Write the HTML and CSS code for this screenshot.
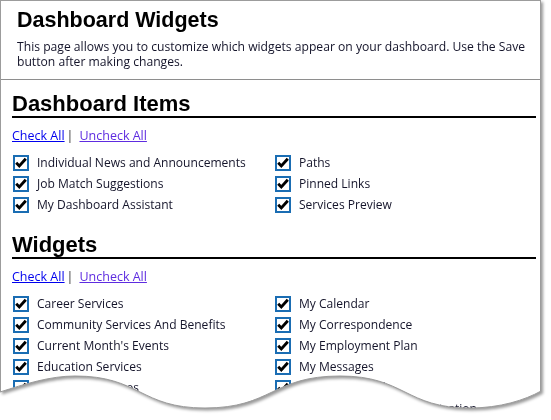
FILE: index.html
```html
<!DOCTYPE html>
<html lang="en">
<head>
<meta charset="utf-8">
<title>Dashboard Widgets</title>
<link rel="stylesheet" href="styles.css">
</head>
<body>
<div class="sheet">
  <div class="page">
    <header class="intro">
      <h1 class="title">Dashboard Widgets</h1>
      <p class="desc">This page allows you to customize which widgets appear on your dashboard. Use the Save button after making changes.</p>
    </header>

    <section class="group">
      <h2 class="group-title">Dashboard Items</h2>
      <div class="bulk"><a href="#" class="bulk-link">Check All</a><span class="sep">|</span><a href="#" class="bulk-link visited">Uncheck All</a></div>
      <ul class="items rows-3">
        <li class="item"><span class="box"><svg viewBox="0 0 12 12"><path d="M1.2 5.8 L4.3 9 L10.8 1.8"/></svg></span>Individual News and Announcements</li>
        <li class="item"><span class="box"><svg viewBox="0 0 12 12"><path d="M1.2 5.8 L4.3 9 L10.8 1.8"/></svg></span>Job Match Suggestions</li>
        <li class="item"><span class="box"><svg viewBox="0 0 12 12"><path d="M1.2 5.8 L4.3 9 L10.8 1.8"/></svg></span>My Dashboard Assistant</li>
        <li class="item"><span class="box"><svg viewBox="0 0 12 12"><path d="M1.2 5.8 L4.3 9 L10.8 1.8"/></svg></span>Paths</li>
        <li class="item"><span class="box"><svg viewBox="0 0 12 12"><path d="M1.2 5.8 L4.3 9 L10.8 1.8"/></svg></span>Pinned Links</li>
        <li class="item"><span class="box"><svg viewBox="0 0 12 12"><path d="M1.2 5.8 L4.3 9 L10.8 1.8"/></svg></span>Services Preview</li>
      </ul>
    </section>

    <section class="group">
      <h2 class="group-title">Widgets</h2>
      <div class="bulk"><a href="#" class="bulk-link">Check All</a><span class="sep">|</span><a href="#" class="bulk-link visited">Uncheck All</a></div>
      <ul class="items rows-6">
        <li class="item"><span class="box"><svg viewBox="0 0 12 12"><path d="M1.2 5.8 L4.3 9 L10.8 1.8"/></svg></span>Career Services</li>
        <li class="item"><span class="box"><svg viewBox="0 0 12 12"><path d="M1.2 5.8 L4.3 9 L10.8 1.8"/></svg></span>Community Services And Benefits</li>
        <li class="item"><span class="box"><svg viewBox="0 0 12 12"><path d="M1.2 5.8 L4.3 9 L10.8 1.8"/></svg></span>Current Month's Events</li>
        <li class="item"><span class="box"><svg viewBox="0 0 12 12"><path d="M1.2 5.8 L4.3 9 L10.8 1.8"/></svg></span>Education Services</li>
        <li class="item"><span class="box"><svg viewBox="0 0 12 12"><path d="M1.2 5.8 L4.3 9 L10.8 1.8"/></svg></span>Employer Services</li>
        <li class="item"><span class="box"><svg viewBox="0 0 12 12"><path d="M1.2 5.8 L4.3 9 L10.8 1.8"/></svg></span>Labor Market Information</li>
        <li class="item"><span class="box"><svg viewBox="0 0 12 12"><path d="M1.2 5.8 L4.3 9 L10.8 1.8"/></svg></span>My Calendar</li>
        <li class="item"><span class="box"><svg viewBox="0 0 12 12"><path d="M1.2 5.8 L4.3 9 L10.8 1.8"/></svg></span>My Correspondence</li>
        <li class="item"><span class="box"><svg viewBox="0 0 12 12"><path d="M1.2 5.8 L4.3 9 L10.8 1.8"/></svg></span>My Employment Plan</li>
        <li class="item"><span class="box"><svg viewBox="0 0 12 12"><path d="M1.2 5.8 L4.3 9 L10.8 1.8"/></svg></span>My Messages</li>
        <li class="item"><span class="box"><svg viewBox="0 0 12 12"><path d="M1.2 5.8 L4.3 9 L10.8 1.8"/></svg></span>My Public Profile</li>
        <li class="item"><span class="box"><svg viewBox="0 0 12 12"><path d="M1.2 5.8 L4.3 9 L10.8 1.8"/></svg></span>My Unemployment Registration</li>
      </ul>
    </section>
  </div>
  <svg class="edge" viewBox="0 0 541 420" width="541" height="420" aria-hidden="true">
    <path d="M541 391 C525 400 500 408 470 408 C405 408 405 376 340 376 C272 376 272 408 205 408 C140 408 140 376 75 376 C50 376 25 384 0 392"/>
  </svg>
</div>
</body>
</html>
```

FILE: styles.css
```css
html, body {
  margin: 0;
  padding: 0;
  background: #ffffff;
}

body {
  font-family: "Open Sans", "Noto Sans", sans-serif;
  color: #14142a;
}

.sheet {
  position: relative;
  width: 541px;
  height: 420px;
  filter: drop-shadow(2px 2px 1.5px rgba(0, 0, 0, 0.4));
}

.page {
  box-sizing: border-box;
  width: 541px;
  height: 420px;
  overflow: hidden;
  background: #ffffff;
  border: 1px solid #9c9c9c;
  border-bottom: none;
  clip-path: path("M0 0 H541 V391 C525 400 500 408 470 408 C405 408 405 376 340 376 C272 376 272 408 205 408 C140 408 140 376 75 376 C50 376 25 384 0 392 Z");
}

.edge {
  position: absolute;
  left: 0;
  top: 0;
  pointer-events: none;
}

.edge path {
  fill: none;
  stroke: #9c9c9c;
  stroke-width: 1;
}

.intro {
  padding: 6px 8px 10px 16px;
  border-bottom: 1px solid #8e8e8e;
}

.title {
  margin: 0;
  font-family: "Liberation Sans", Arial, sans-serif;
  font-weight: bold;
  font-size: 21.5px;
  line-height: 26px;
  color: #000;
}

.desc {
  margin: 6px 0 0 0;
  font-size: 12.15px;
  line-height: 15px;
}

.group {
  padding: 0 4px 0 11px;
}

.group-title {
  margin: 12px 0 0 0;
  font-family: "Liberation Sans", Arial, sans-serif;
  font-weight: bold;
  font-size: 22px;
  line-height: 24px;
  color: #000;
  border-bottom: 2px solid #000;
}

.group + .group .group-title {
  margin-top: 18px;
}

.bulk {
  margin-top: 10px;
  font-size: 12.5px;
  line-height: 16px;
}

.bulk-link {
  color: #0000ee;
  text-decoration: underline;
}

.bulk-link.visited {
  color: #5e2ce0;
}

.sep {
  color: #333;
  margin: 0 6px 0 2px;
}

.items {
  list-style: none;
  margin: 8px 0 0 0;
  padding: 0;
  display: grid;
  grid-template-columns: 1fr 1fr;
  grid-auto-flow: column;
  grid-auto-rows: 21px;
}

.rows-3 {
  grid-template-rows: repeat(3, 21px);
}

.rows-6 {
  grid-template-rows: repeat(6, 21px);
}

.item {
  display: flex;
  align-items: center;
  gap: 8px;
  font-size: 12.05px;
  line-height: 21px;
  white-space: nowrap;
}

.box {
  box-sizing: border-box;
  flex: none;
  width: 16px;
  height: 16px;
  margin-left: 1px;
  border: 2px solid #1a6db3;
  background: #fff;
  display: flex;
}

.box svg {
  width: 12px;
  height: 12px;
}

.box path {
  fill: none;
  stroke: #000;
  stroke-width: 2.9;
  stroke-linecap: butt;
  stroke-linejoin: miter;
}
```
